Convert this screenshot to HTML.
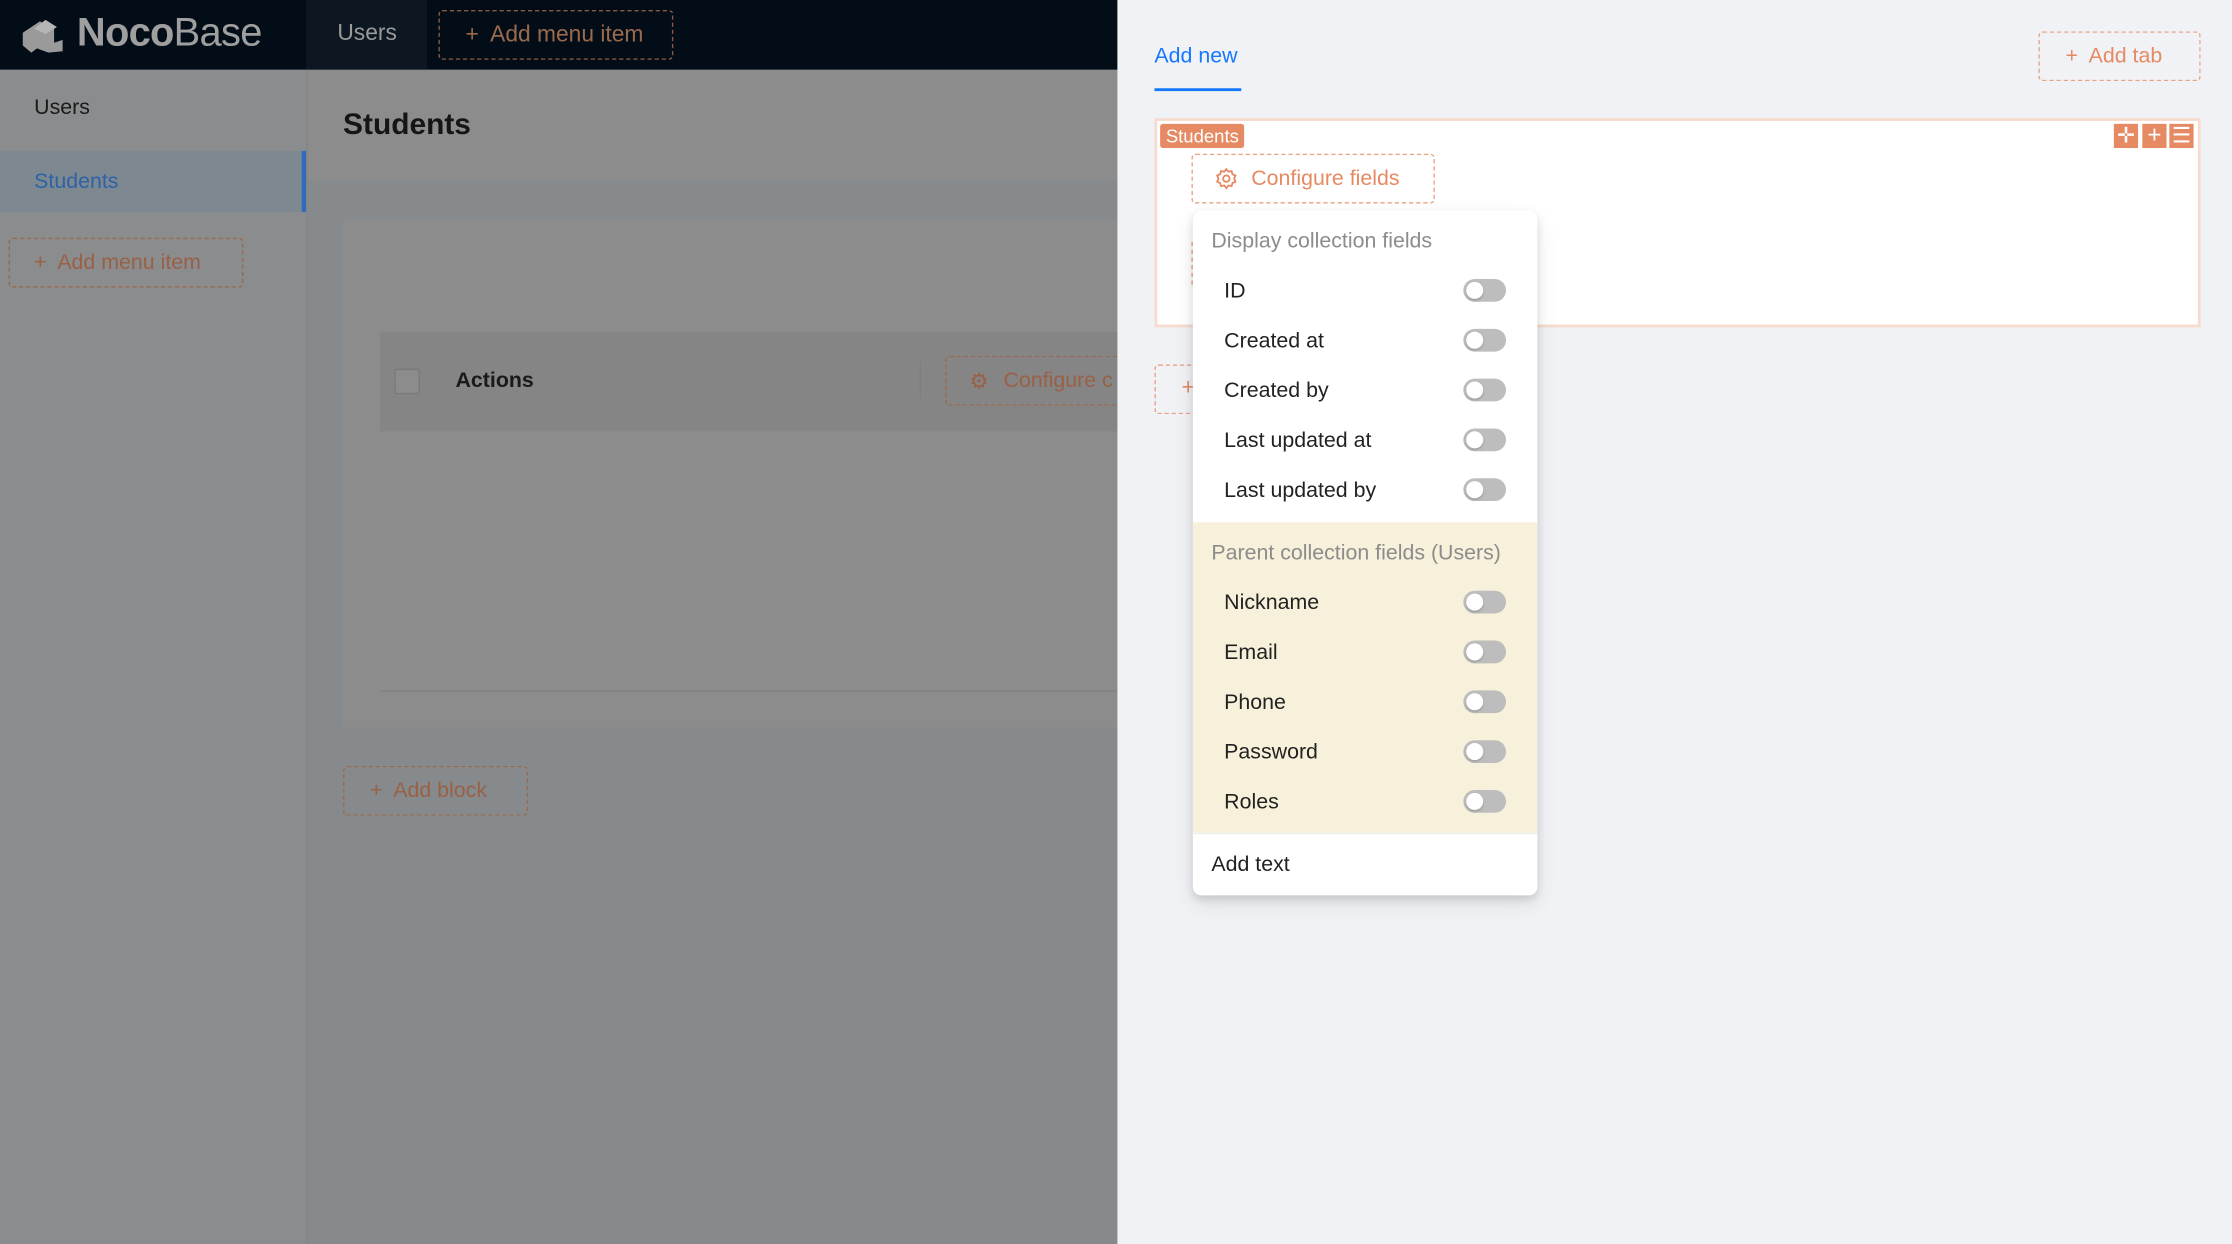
<!DOCTYPE html>
<html><head><meta charset="utf-8"><style>
html,body{margin:0;padding:0;width:2232px;height:1244px;overflow:hidden;background:#878a8c}
#s{position:absolute;left:0;top:0;width:1568px;height:874px;transform:scale(1.42347);transform-origin:0 0;font-family:"Liberation Sans",sans-serif;}
.a{position:absolute}
.dash{position:absolute;border:1px dashed;border-radius:3px;box-sizing:border-box}
.tg{position:absolute;left:190px;width:30px;height:16px;border-radius:8px;background:#bdbdbd}
.tg:after{content:"";position:absolute;left:2px;top:2px;width:12px;height:12px;border-radius:50%;background:#fff;box-shadow:0 1px 2px rgba(0,0,0,.2)}
.it{position:absolute;left:22px;font-size:15px;color:#222}
</style></head><body><div id="s">
<!-- top bar -->
<div class="a" style="left:0;top:0;width:785px;height:49px;background:#030d18"></div>
<div class="a" style="left:215px;top:0;width:85px;height:49px;background:#0d1721"></div>
<svg class="a" style="left:14px;top:10px" width="34" height="28" viewBox="0 0 34 28"><path d="M2 13 L14 5 L24 10 L24 20 L30 18 L30 26 L20 27 L12 24 L8 27 L2 22Z" fill="#9a9a9a"/><path d="M10 10 L18 4 L26 9 L18 14Z" fill="#b5b5b5"/></svg>
<div class="a" style="left:54px;top:7px;font-size:28px;color:#9f9f9f;letter-spacing:-0.5px"><b>Noco</b><span style="font-weight:300">Base</span></div>
<div class="a" style="left:237px;top:15px;font-size:16px;color:#9a9a9a">Users</div>
<div class="dash" style="left:308px;top:7px;width:165px;height:35px;border-color:#8a5a40;color:#9a6a4c;font-size:16px;padding:8px 0 0 18px">+&nbsp; Add menu item</div>
<!-- sidebar -->
<div class="a" style="left:0;top:49px;width:215px;height:825px;background:#8b8c8d;border-right:1px solid #848586"></div>
<div class="a" style="left:24px;top:67px;font-size:15px;color:#1a1a1a">Users</div>
<div class="a" style="left:0;top:106px;width:212px;height:43px;background:#7d8890;border-right:3px solid #2f6bbd"></div>
<div class="a" style="left:24px;top:119px;font-size:15px;color:#2d62a8">Students</div>
<div class="dash" style="left:6px;top:167px;width:165px;height:35px;border-color:#9a6a50;color:#9a6046;font-size:15px;padding:8px 0 0 17px">+&nbsp; Add menu item</div>
<!-- main -->
<div class="a" style="left:216px;top:49px;width:569px;height:78px;background:#8c8c8c"></div>
<div class="a" style="left:241px;top:76px;font-size:21px;font-weight:bold;color:#151515">Students</div>
<div class="a" style="left:241px;top:154px;width:544px;height:357px;background:#8c8c8c"></div>
<div class="a" style="left:267px;top:233px;width:518px;height:70px;background:#858585"></div>
<div class="a" style="left:277px;top:259px;width:16px;height:16px;border:1px solid #7a7a7a;border-radius:2px;background:#8c8c8c"></div>
<div class="a" style="left:320px;top:259px;font-size:15px;font-weight:bold;color:#1a1a1a">Actions</div>
<div class="a" style="left:646px;top:255px;width:1px;height:24px;background:#7e7e7e"></div>
<div class="dash" style="left:664px;top:250px;width:140px;height:35px;border-color:#9a6a50;color:#9a6046;font-size:15px;padding:8px 0 0 40px">Configure c</div>
<div class="a" style="left:681px;top:259px;color:#9a6046;font-size:15px">⚙</div>
<div class="a" style="left:267px;top:485px;width:518px;height:1px;background:#838383"></div>
<div class="dash" style="left:241px;top:538px;width:130px;height:35px;border-color:#9a6a50;color:#9a6046;font-size:15px;padding:8px 0 0 18px">+&nbsp; Add block</div>
<!-- drawer -->
<div class="a" style="left:785px;top:0;width:783px;height:874px;background:#f0f2f5"></div>
<div class="a" style="left:811px;top:31px;font-size:15px;color:#1677ff">Add new</div>
<div class="a" style="left:811px;top:62px;width:61px;height:2px;background:#1677ff"></div>
<div class="dash" style="left:1432px;top:22px;width:114px;height:35px;border-color:#e9a386;color:#e58a62;font-size:15px;padding:8px 0 0 18px">+&nbsp; Add tab</div>
<div class="a" style="left:811px;top:83px;width:735px;height:147px;background:#fff;border:2px solid #f6dccf;box-sizing:border-box"></div>
<div class="a" style="left:815px;top:87px;height:17px;padding:0 4px;background:#e58a62;color:#fff;font-size:13px;border-radius:2px;line-height:17px">Students</div>
<div class="a" style="left:1485px;top:87px;width:17px;height:17px;background:#e58a62;color:#fff;font-size:15px;line-height:17px;text-align:center">✛</div>
<div class="a" style="left:1505px;top:87px;width:17px;height:17px;background:#e58a62;color:#fff;font-size:17px;line-height:16px;text-align:center">+</div>
<div class="a" style="left:1524px;top:87px;width:17px;height:17px;background:#e58a62;color:#fff;font-size:15px;line-height:17px;text-align:center">☰</div>
<div class="dash" style="left:837px;top:108px;width:171px;height:35px;border-color:#e9a386;color:#e58a62;font-size:15px;padding:8px 0 0 41px">Configure fields</div>
<svg class="a" style="left:853px;top:117px" width="17" height="17" viewBox="0 0 24 24" fill="none" stroke="#e58a62" stroke-width="1.8"><circle cx="12" cy="12" r="3.2"/><path d="M12 2.5l2 2.6 3.2-.6.9 3.1 3 1.3-1.3 3 1.3 3.1-3 1.3-.9 3.1-3.2-.6-2 2.6-2-2.6-3.2.6-.9-3.1-3-1.3 1.3-3.1-1.3-3 3-1.3.9-3.1 3.2.6z"/></svg>
<div class="dash" style="left:811px;top:256px;width:40px;height:35px;border-color:#e9a386;color:#e58a62;font-size:16px;padding:7px 0 0 18px">+</div>
<div class="a" style="left:837px;top:170px;width:1px;height:30px;border-left:1px dashed #e9a386"></div>
<!-- dropdown -->
<div class="a" style="left:838px;top:148px;width:242px;height:481px;background:#fff;border-radius:6px;box-shadow:0 6px 16px rgba(0,0,0,.08),0 3px 6px rgba(0,0,0,.12);overflow:hidden">
<div class="a" style="left:13px;top:13px;font-size:15px;color:#8c8c8c">Display collection fields</div>
<div class="it" style="top:48px">ID</div><div class="tg" style="top:48px"></div>
<div class="it" style="top:83px">Created at</div><div class="tg" style="top:83px"></div>
<div class="it" style="top:118px">Created by</div><div class="tg" style="top:118px"></div>
<div class="it" style="top:153px">Last updated at</div><div class="tg" style="top:153px"></div>
<div class="it" style="top:188px">Last updated by</div><div class="tg" style="top:188px"></div>
<div class="a" style="left:0;top:219px;width:242px;height:218px;background:#f7f0da"></div>
<div class="a" style="left:13px;top:232px;font-size:15px;color:#8c8c8c">Parent collection fields (Users)</div>
<div class="it" style="top:267px">Nickname</div><div class="tg" style="top:267px"></div>
<div class="it" style="top:302px">Email</div><div class="tg" style="top:302px"></div>
<div class="it" style="top:337px">Phone</div><div class="tg" style="top:337px"></div>
<div class="it" style="top:372px">Password</div><div class="tg" style="top:372px"></div>
<div class="it" style="top:407px">Roles</div><div class="tg" style="top:407px"></div>
<div class="a" style="left:0;top:437px;width:242px;height:1px;background:#eee"></div>
<div class="it" style="left:13px;top:451px">Add text</div>
</div>
</div></body></html>
